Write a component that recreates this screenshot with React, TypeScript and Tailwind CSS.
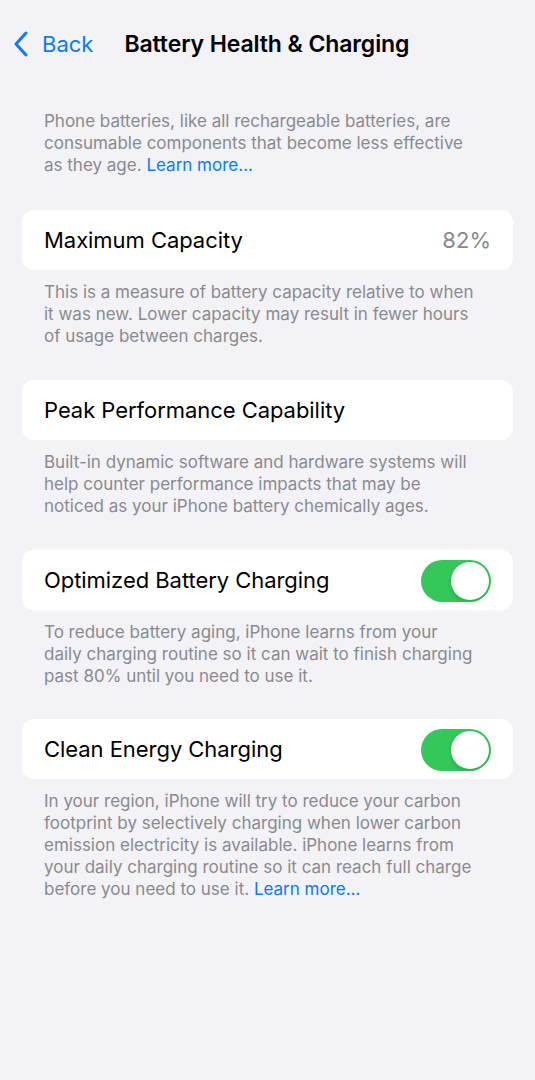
import React from "react";

const Toggle = () => (
  <div className="relative w-[70px] h-[42px] rounded-full bg-[#34c759]">
    <div className="absolute right-[2px] top-[2px] w-[38px] h-[38px] rounded-full bg-white shadow-[0_2px_4px_rgba(0,0,0,0.15)]" />
  </div>
);

const Card = ({ label, right }: { label: string; right?: React.ReactNode }) => (
  <div className="mx-[22px] h-[60px] rounded-[12px] bg-white flex items-center justify-between pl-[22px] pr-[22px] pt-[1px]">
    <span className="text-[22px] text-black tracking-[-0.05px]">{label}</span>
    {right}
  </div>
);

const Footer = ({ children }: { children: React.ReactNode }) => (
  <div className="mt-[11px] px-[44px] text-[17px] leading-[22px] text-[#8a8a8e] whitespace-nowrap">
    {children}
  </div>
);

export default function App() {
  return (
    <div
      className="min-h-[1080px] w-[535px] bg-[#f2f2f7]"
      style={{ fontFamily: "Inter, 'Noto Sans', sans-serif" }}
    >
      <div className="h-[88px] flex items-center">
        <div className="flex items-center pl-[12px] text-[#0a7aff]">
          <svg width="17" height="28" viewBox="0 0 17 28" fill="none">
            <path d="M14 3 L4 14 L14 25" stroke="#0a7aff" strokeWidth="3" strokeLinecap="round" strokeLinejoin="round" />
          </svg>
          <span className="ml-[13px] text-[22px]">Back</span>
        </div>
        <div className="ml-[31px] text-[23px] font-semibold text-black tracking-[-0.1px]">
          Battery Health &amp; Charging
        </div>
      </div>

      <div className="pt-[22px] px-[44px] text-[17px] leading-[22px] text-[#8a8a8e] whitespace-nowrap">
        Phone batteries, like all rechargeable batteries, are
        <br />
        consumable components that become less effective
        <br />
        as they age. <span className="text-[#0a7aff]">Learn more...</span>
      </div>

      <div className="mt-[34px]">
        <Card label="Maximum Capacity" right={<span className="text-[22px] text-[#8a8a8e]">82%</span>} />
        <Footer>
          This is a measure of battery capacity relative to when
          <br />
          it was new. Lower capacity may result in fewer hours
          <br />
          of usage between charges.
        </Footer>
      </div>

      <div className="mt-[33px]">
        <Card label="Peak Performance Capability" />
        <Footer>
          Built-in dynamic software and hardware systems will
          <br />
          help counter performance impacts that may be
          <br />
          noticed as your iPhone battery chemically ages.
        </Footer>
      </div>

      <div className="mt-[33px]">
        <Card label="Optimized Battery Charging" right={<Toggle />} />
        <Footer>
          To reduce battery aging, iPhone learns from your
          <br />
          daily charging routine so it can wait to finish charging
          <br />
          past 80% until you need to use it.
        </Footer>
      </div>

      <div className="mt-[32px]">
        <Card label="Clean Energy Charging" right={<Toggle />} />
        <Footer>
          In your region, iPhone will try to reduce your carbon
          <br />
          footprint by selectively charging when lower carbon
          <br />
          emission electricity is available. iPhone learns from
          <br />
          your daily charging routine so it can reach full charge
          <br />
          before you need to use it. <span className="text-[#0a7aff]">Learn more...</span>
        </Footer>
      </div>
    </div>
  );
}
